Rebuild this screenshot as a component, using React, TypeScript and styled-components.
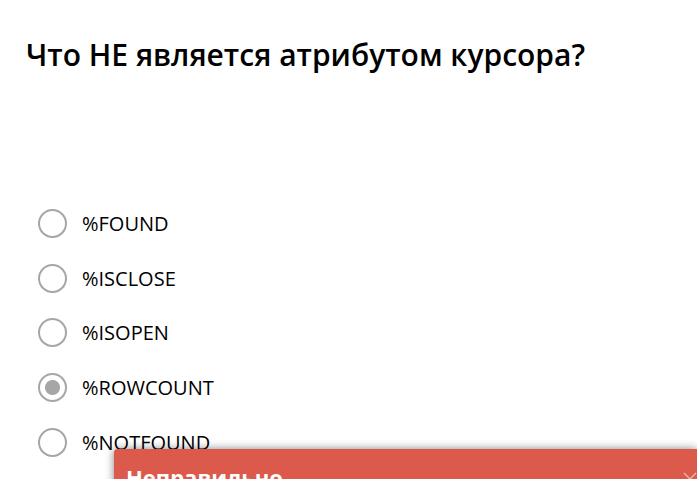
import React, { useState } from "react";
import styled, { createGlobalStyle } from "styled-components";

const GlobalStyle = createGlobalStyle`
  *, *::before, *::after { box-sizing: border-box; }
  body {
    margin: 0;
    background: #fff;
    color: #000;
    font-family: "Open Sans", "Noto Sans", sans-serif;
    overflow: hidden;
  }
`;

const Page = styled.main`
  position: relative;
  height: 100vh;
  overflow: hidden;
`;

const Question = styled.h1`
  margin: 0;
  padding: 33px 26px 0;
  font-size: 30px;
  line-height: 44px;
  font-weight: 600;
`;

const Options = styled.fieldset`
  display: grid;
  grid-auto-rows: 1fr;
  height: 274px;
  margin: 119px 0 0;
  padding: 0 38px;
  border: 0;
`;

const Option = styled.label`
  display: flex;
  align-items: center;
  gap: 15px;
  font-size: 20px;
  line-height: 29px;
  cursor: pointer;
`;

const Radio = styled.input`
  appearance: none;
  flex: none;
  width: 29px;
  height: 29px;
  margin: 0;
  border: 2px solid #a6a6a6;
  border-radius: 50%;
  background: #fff;
  &:checked {
    background: radial-gradient(circle, #a6a6a6 0 7px, #fff 8px);
  }
`;

const Toast = styled.div`
  position: absolute;
  top: 449px;
  left: 114px;
  right: 0;
  display: flex;
  justify-content: space-between;
  padding: 12px 0 24px 12px;
  border-top-left-radius: 4px;
  background: #dc5a4b;
  color: #fff;
  box-shadow: 0 0 8px rgba(0, 0, 0, 0.5);
`;

const ToastTitle = styled.strong`
  font-size: 22px;
  line-height: 32px;
  font-weight: 700;
`;

const CloseButton = styled.button`
  flex: none;
  width: 14px;
  height: 28px;
  padding: 0;
  border: 0;
  background: none;
  color: #f0b4ac;
  overflow: hidden;
  svg { display: block; }
`;

const answers = ["%FOUND", "%ISCLOSE", "%ISOPEN", "%ROWCOUNT", "%NOTFOUND"];

export default function App() {
  const [selected, setSelected] = useState("%ROWCOUNT");
  return (
    <Page>
      <GlobalStyle />
      <Question id="question">Что НЕ является атрибутом курсора?</Question>
      <Options aria-labelledby="question">
        {answers.map((answer) => (
          <Option key={answer}>
            <Radio
              type="radio"
              name="answer"
              value={answer}
              checked={selected === answer}
              onChange={() => setSelected(answer)}
            />
            {answer}
          </Option>
        ))}
      </Options>
      <Toast role="alert">
        <ToastTitle>Неправильно</ToastTitle>
        <CloseButton type="button" aria-label="Закрыть">
          <svg width="14" height="28" viewBox="0 0 14 28" fill="none" stroke="currentColor" strokeWidth="1.4">
            <path d="M1 12L13 24M13 12L1 24" />
          </svg>
        </CloseButton>
      </Toast>
    </Page>
  );
}
